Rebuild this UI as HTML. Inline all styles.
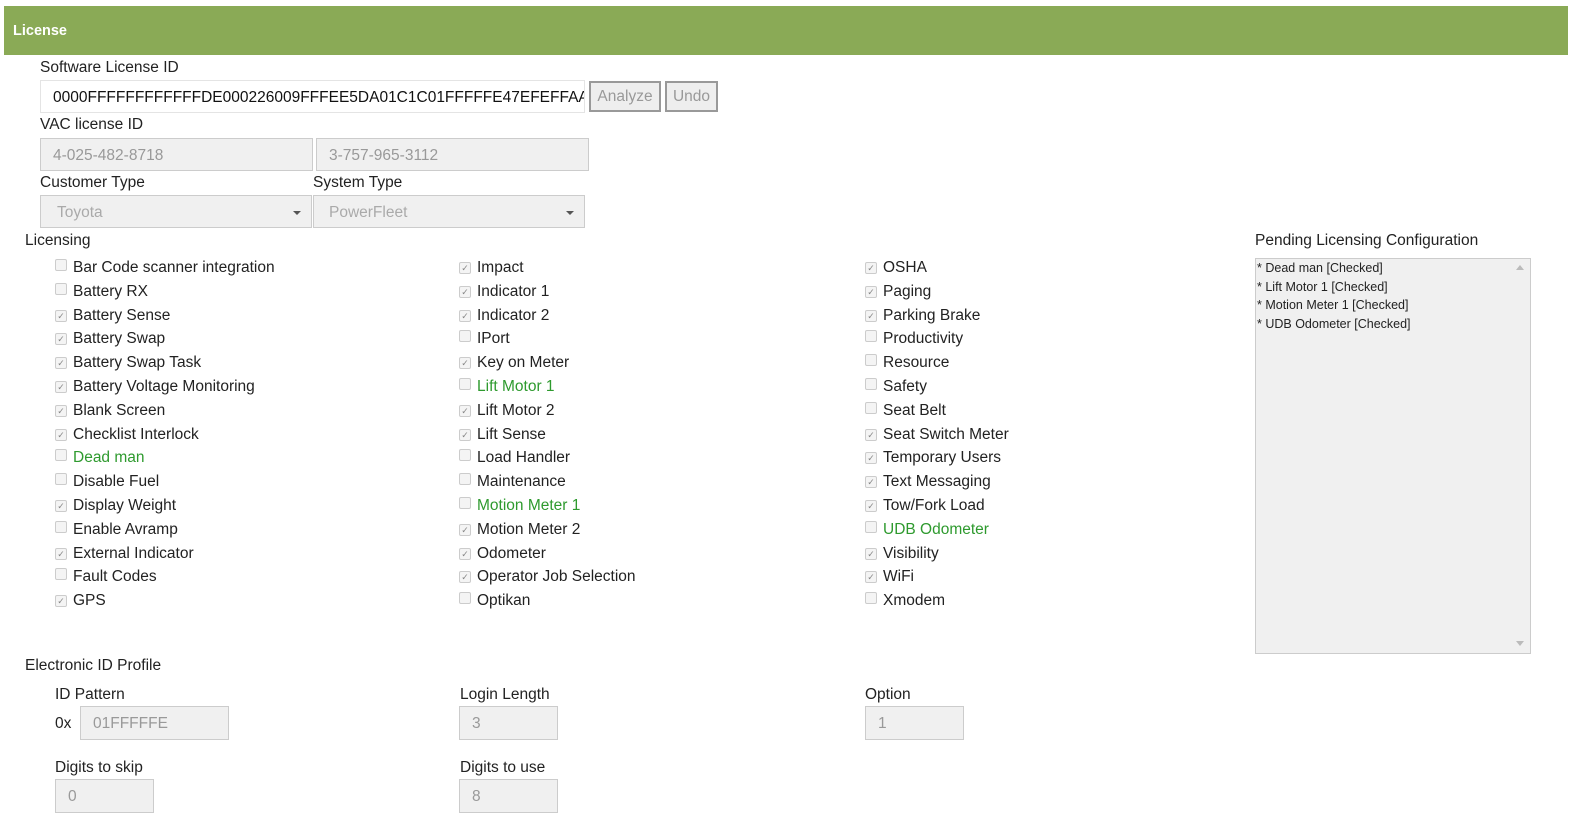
<!DOCTYPE html>
<html><head><meta charset="utf-8"><style>
body{margin:0;width:1581px;height:839px;background:#fff;font-family:"Liberation Sans",sans-serif;color:#222;position:relative;overflow:hidden;font-size:15.5px}
.a{position:absolute}
.hdr{left:4px;top:6px;width:1564px;height:49px;background:#8aaa56;color:#fff;font-weight:bold;font-size:14.5px;line-height:50px;padding-left:9px;box-sizing:border-box}
.lbl{font-size:15.5px;color:#222}
.in{border:1px solid #ccc;background:#f0f0f0;color:#999;box-sizing:border-box;padding-left:12px;font-size:15.5px}
.btn{border:2px solid #999;background:#eee;color:#999;font-size:15.5px;box-sizing:border-box;text-align:center}
.col{position:absolute;top:256px}
.col div{height:23.8px;line-height:24px;white-space:nowrap}
.cb{display:inline-block;width:10px;height:10px;border:1px solid #ccc;border-radius:2px;background:#f4f4f4;margin-right:6px;vertical-align:1px;position:relative;font-size:9px;line-height:10px;text-align:center;color:#888}
.g{color:#2e9a2e}
.arrow{position:absolute;right:10px;top:15px;width:0;height:0;border-left:4px solid transparent;border-right:4px solid transparent;border-top:4px solid #555}
</style></head><body>
<div class="a hdr">License</div>
<div class="a lbl" style="left:40px;top:59px">Software License ID</div>
<div class="a in" style="left:40px;top:80px;width:545px;height:33px;line-height:33px;background:#fff;color:#111;border-color:#e4e4e4;overflow:hidden;white-space:nowrap">0000FFFFFFFFFFFFDE000226009FFFEE5DA01C1C01FFFFFE47EFEFFAA0</div>
<div class="a btn" style="left:589px;top:81px;width:72px;height:31px;line-height:27px">Analyze</div>
<div class="a btn" style="left:665px;top:81px;width:53px;height:31px;line-height:27px">Undo</div>
<div class="a lbl" style="left:40px;top:116px">VAC license ID</div>
<div class="a in" style="left:40px;top:138px;width:273px;height:33px;line-height:33px">4-025-482-8718</div>
<div class="a in" style="left:316px;top:138px;width:273px;height:33px;line-height:33px">3-757-965-3112</div>
<div class="a lbl" style="left:40px;top:174px">Customer Type</div>
<div class="a lbl" style="left:313px;top:174px">System Type</div>
<div class="a in" style="left:40px;top:195px;width:272px;height:33px;line-height:33px;padding-left:16px;color:#aaa">Toyota<span class="arrow"></span></div>
<div class="a in" style="left:313px;top:195px;width:272px;height:33px;line-height:33px;padding-left:15px;color:#aaa">PowerFleet<span class="arrow"></span></div>
<div class="a lbl" style="left:25px;top:232px">Licensing</div>
<div class="a lbl" style="left:1255px;top:232px">Pending Licensing Configuration</div>
<div class="a" style="left:1255px;top:258px;width:276px;height:396px;border:1px solid #ccc;background:#f0f0f0;box-sizing:border-box;font-size:12.5px;line-height:18.7px;padding-left:1px;color:#222">* Dead man [Checked]<br>* Lift Motor 1 [Checked]<br>* Motion Meter 1 [Checked]<br>* UDB Odometer [Checked]
<span style="position:absolute;right:6px;top:6px;border-left:4px solid transparent;border-right:4px solid transparent;border-bottom:5px solid #bbb"></span>
<span style="position:absolute;right:6px;bottom:7px;border-left:4px solid transparent;border-right:4px solid transparent;border-top:5px solid #bbb"></span></div>

<div class="col" style="left:55px">
<div><span class="cb"></span>Bar Code scanner integration</div>
<div><span class="cb"></span>Battery RX</div>
<div><span class="cb">✓</span>Battery Sense</div>
<div><span class="cb">✓</span>Battery Swap</div>
<div><span class="cb">✓</span>Battery Swap Task</div>
<div><span class="cb">✓</span>Battery Voltage Monitoring</div>
<div><span class="cb">✓</span>Blank Screen</div>
<div><span class="cb">✓</span>Checklist Interlock</div>
<div class="g"><span class="cb"></span>Dead man</div>
<div><span class="cb"></span>Disable Fuel</div>
<div><span class="cb">✓</span>Display Weight</div>
<div><span class="cb"></span>Enable Avramp</div>
<div><span class="cb">✓</span>External Indicator</div>
<div><span class="cb"></span>Fault Codes</div>
<div><span class="cb">✓</span>GPS</div>
</div>
<div class="col" style="left:459px">
<div><span class="cb">✓</span>Impact</div>
<div><span class="cb">✓</span>Indicator 1</div>
<div><span class="cb">✓</span>Indicator 2</div>
<div><span class="cb"></span>IPort</div>
<div><span class="cb">✓</span>Key on Meter</div>
<div class="g"><span class="cb"></span>Lift Motor 1</div>
<div><span class="cb">✓</span>Lift Motor 2</div>
<div><span class="cb">✓</span>Lift Sense</div>
<div><span class="cb"></span>Load Handler</div>
<div><span class="cb"></span>Maintenance</div>
<div class="g"><span class="cb"></span>Motion Meter 1</div>
<div><span class="cb">✓</span>Motion Meter 2</div>
<div><span class="cb">✓</span>Odometer</div>
<div><span class="cb">✓</span>Operator Job Selection</div>
<div><span class="cb"></span>Optikan</div>
</div>
<div class="col" style="left:865px">
<div><span class="cb">✓</span>OSHA</div>
<div><span class="cb">✓</span>Paging</div>
<div><span class="cb">✓</span>Parking Brake</div>
<div><span class="cb"></span>Productivity</div>
<div><span class="cb"></span>Resource</div>
<div><span class="cb"></span>Safety</div>
<div><span class="cb"></span>Seat Belt</div>
<div><span class="cb">✓</span>Seat Switch Meter</div>
<div><span class="cb">✓</span>Temporary Users</div>
<div><span class="cb">✓</span>Text Messaging</div>
<div><span class="cb">✓</span>Tow/Fork Load</div>
<div class="g"><span class="cb"></span>UDB Odometer</div>
<div><span class="cb">✓</span>Visibility</div>
<div><span class="cb">✓</span>WiFi</div>
<div><span class="cb"></span>Xmodem</div>
</div>

<div class="a lbl" style="left:25px;top:657px">Electronic ID Profile</div>
<div class="a lbl" style="left:55px;top:686px">ID Pattern</div>
<div class="a lbl" style="left:55px;top:715px">0x</div>
<div class="a in" style="left:80px;top:706px;width:149px;height:34px;line-height:34px">01FFFFFE</div>
<div class="a lbl" style="left:460px;top:686px">Login Length</div>
<div class="a in" style="left:459px;top:706px;width:99px;height:34px;line-height:34px">3</div>
<div class="a lbl" style="left:865px;top:686px">Option</div>
<div class="a in" style="left:865px;top:706px;width:99px;height:34px;line-height:34px">1</div>
<div class="a lbl" style="left:55px;top:759px">Digits to skip</div>
<div class="a in" style="left:55px;top:779px;width:99px;height:34px;line-height:34px">0</div>
<div class="a lbl" style="left:460px;top:759px">Digits to use</div>
<div class="a in" style="left:459px;top:779px;width:99px;height:34px;line-height:34px">8</div>
</body></html>
